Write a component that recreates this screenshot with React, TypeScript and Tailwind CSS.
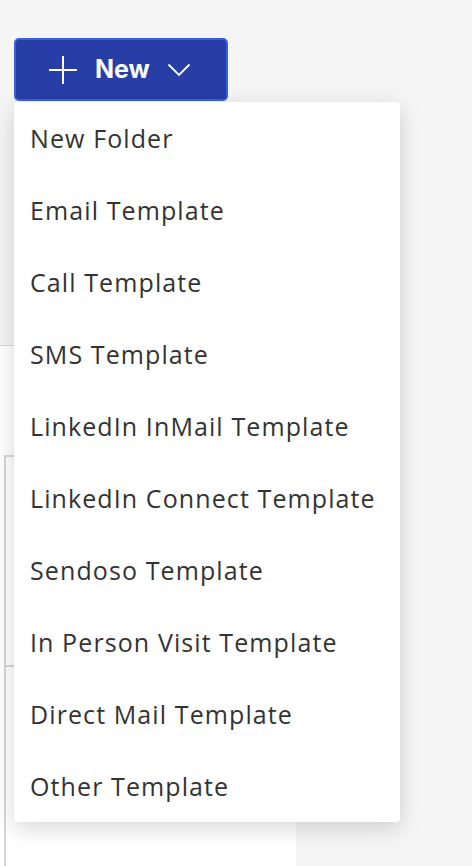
import React from 'react';

const items = [
  'New Folder',
  'Email Template',
  'Call Template',
  'SMS Template',
  'LinkedIn InMail Template',
  'LinkedIn Connect Template',
  'Sendoso Template',
  'In Person Visit Template',
  'Direct Mail Template',
  'Other Template',
];

export default function App() {
  return (
    <div className="relative h-[866px] w-[472px] overflow-hidden bg-[#f5f5f5]" style={{ fontFamily: '"Open Sans", "Noto Sans", sans-serif' }}>
      {/* page content behind the menu */}
      <div className="flex h-full flex-col pt-[345px]">
        <div className="flex w-[296px] flex-1 flex-col border-t border-[#d6d6d6] bg-white pt-[109px]">
          <div className="ml-[4px] flex flex-1 flex-col border-l-2 border-t-2 border-[#d6d6d6]">
            <div className="h-[208px]" />
            <div className="border-t-2 border-[#d6d6d6]" />
          </div>
        </div>
      </div>

      {/* New button */}
      <div className="absolute left-[14px] top-[38px]">
        <button className="flex h-[63px] w-[214px] items-center gap-[17px] rounded-[5px] border-2 border-[#3b5fe0] bg-[#263ea6] pl-[32px] text-white">
          <svg width="30" height="30" viewBox="0 0 30 30" fill="none" stroke="white" strokeWidth="2">
            <path d="M15 1v28M1 15h28" />
          </svg>
          <span className="text-[25px] font-bold" style={{ fontFamily: 'Inter, "Liberation Sans", sans-serif' }}>New</span>
          <svg width="24" height="14" viewBox="0 0 24 14" fill="none" stroke="white" strokeWidth="1.8">
            <path d="M1.5 1.5l10.5 10.5L22.5 1.5" />
          </svg>
        </button>

        {/* dropdown */}
        <ul className="mt-px w-[386px] rounded-[4px] bg-white shadow-[0_6px_22px_rgba(0,0,0,0.16)]">
          {items.map((item) => (
            <li key={item} className="flex h-[72px] items-center pl-[16px] pt-[2px] text-[25px] tracking-[1.1px] text-[#333333]">
              {item}
            </li>
          ))}
        </ul>
      </div>
    </div>
  );
}
